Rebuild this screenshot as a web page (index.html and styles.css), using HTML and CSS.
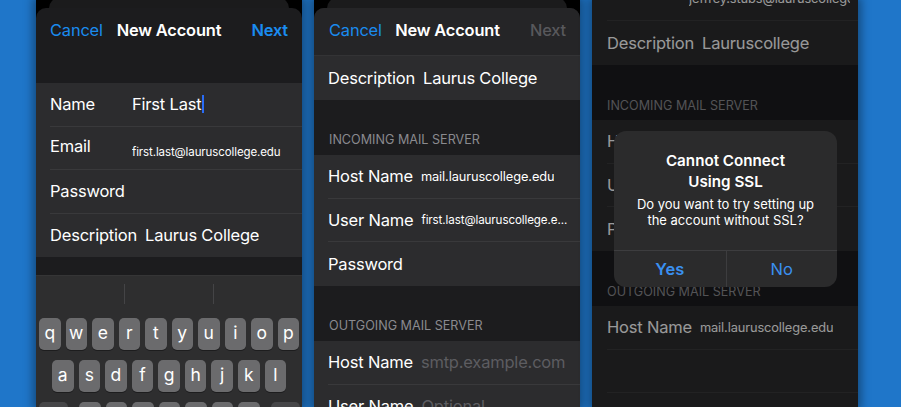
FILE: index.html
```html
<!DOCTYPE html>
<html lang="en">
<head>
<meta charset="utf-8">
<title>New Account setup</title>
<link rel="stylesheet" href="styles.css">
</head>
<body>
<div class="stage">

  <section class="phone">
    <div class="backcard"></div>
    <div class="sheet">
      <header class="nav">
        <span class="link">Cancel</span>
        <span class="title">New Account</span>
        <span class="link next">Next</span>
      </header>
      <div class="navspace"></div>
      <div class="group">
        <div class="row"><span class="label">Name</span><span class="value">First Last<span class="caret"></span></span></div>
        <div class="row"><span class="label label-up">Email</span><span class="value small email">first.last@lauruscollege.edu</span></div>
        <div class="row"><span class="label">Password</span></div>
        <div class="row"><span class="label">Description</span><span class="value">Laurus College</span></div>
      </div>
      <div class="kb-gap"></div>
      <div class="keyboard">
        <div class="predict"><span></span><span class="div"></span><span></span><span class="div"></span><span></span></div>
        <div class="krow">
          <span class="key">q</span><span class="key">w</span><span class="key">e</span><span class="key">r</span><span class="key">t</span><span class="key">y</span><span class="key">u</span><span class="key">i</span><span class="key">o</span><span class="key">p</span>
        </div>
        <div class="krow krow2">
          <span class="key">a</span><span class="key">s</span><span class="key">d</span><span class="key">f</span><span class="key">g</span><span class="key">h</span><span class="key">j</span><span class="key">k</span><span class="key">l</span>
        </div>
        <div class="krow krow3">
          <span class="key mod"></span>
          <span class="key"></span><span class="key"></span><span class="key"></span><span class="key"></span><span class="key"></span><span class="key"></span><span class="key"></span>
          <span class="key mod"></span>
        </div>
      </div>
    </div>
  </section>

  <section class="phone">
    <div class="backcard"></div>
    <div class="sheet">
      <header class="nav nav-solid">
        <span class="link">Cancel</span>
        <span class="title">New Account</span>
        <span class="link next disabled">Next</span>
      </header>
      <div class="group">
        <div class="row"><span class="label">Description</span><span class="value">Laurus College</span></div>
      </div>
      <div class="section-head">INCOMING MAIL SERVER</div>
      <div class="group">
        <div class="row"><span class="label">Host Name</span><span class="value small">mail.lauruscollege.edu</span></div>
        <div class="row"><span class="label">User Name</span><span class="value small tight">first.last@lauruscollege.e...</span></div>
        <div class="row"><span class="label">Password</span></div>
      </div>
      <div class="section-head">OUTGOING MAIL SERVER</div>
      <div class="group">
        <div class="row"><span class="label">Host Name</span><span class="value placeholder">smtp.example.com</span></div>
        <div class="row"><span class="label">User Name</span><span class="value placeholder">Optional</span></div>
      </div>
    </div>
  </section>

  <section class="phone phone3">
    <div class="scroll">
      <div class="group">
        <div class="row"><span class="label"></span><span class="value small">jeffrey.stubs@lauruscollege.c...</span></div>
        <div class="row"><span class="label">Description</span><span class="value">Lauruscollege</span></div>
      </div>
      <div class="section-head">INCOMING MAIL SERVER</div>
      <div class="group">
        <div class="row"><span class="label">Host Name</span></div>
        <div class="row"><span class="label">User Name</span></div>
        <div class="row"><span class="label">Password</span></div>
      </div>
      <div class="section-head">OUTGOING MAIL SERVER</div>
      <div class="group">
        <div class="row"><span class="label">Host Name</span><span class="value small">mail.lauruscollege.edu</span></div>
        <div class="row"><span class="label"></span></div>
        <div class="row"><span class="label"></span></div>
      </div>
    </div>
    <div class="dim"></div>
    <div class="alert">
      <div class="alert-body">
        <div class="alert-title">Cannot Connect<br>Using SSL</div>
        <div class="alert-msg">Do you want to try setting up<br>the account without SSL?</div>
      </div>
      <div class="alert-actions">
        <span class="alert-btn bold">Yes</span>
        <span class="alert-btn">No</span>
      </div>
    </div>
  </section>

</div>
</body>
</html>
```

FILE: styles.css
```css
* { box-sizing: border-box; margin: 0; padding: 0; }

html, body {
  width: 901px;
  height: 407px;
  overflow: hidden;
}

body {
  background: #1f76c9;
  font-family: Inter, "Noto Sans", "Liberation Sans", sans-serif;
  -webkit-font-smoothing: antialiased;
  color: #fff;
}

.stage {
  display: flex;
  gap: 12px;
  padding-left: 36px;
  height: 407px;
}

.phone {
  position: relative;
  width: 266px;
  height: 407px;
  flex-shrink: 0;
  background: #000;
  overflow: hidden;
  display: flex;
  flex-direction: column;
  box-shadow: 0 0 9px 3px rgba(0, 0, 0, 0.38);
}

.backcard {
  height: 10px;
  margin: -2px 13px 0;
  flex-shrink: 0;
  background: #1b1b1c;
  border-radius: 10px 10px 0 0;
}

.sheet {
  flex: 1;
  display: flex;
  flex-direction: column;
  background: #1c1c1e;
  border-radius: 10px 10px 0 0;
  overflow: hidden;
}

.nav {
  height: 44px;
  flex-shrink: 0;
  display: grid;
  grid-template-columns: 1fr auto 1fr;
  align-items: center;
  padding: 0 14px;
  font-size: 16.4px;
  letter-spacing: -0.15px;
}

.nav-solid {
  height: 48px;
  padding: 0 14px 4px 15px;
  background: #252527;
  border-bottom: 1px solid #333335;
}

.link { color: #1a8cf0; }
.title { color: #fff; font-weight: 600; text-align: center; }
.next { text-align: right; font-weight: 600; }
.next.disabled { color: #58585c; font-weight: 500; }

.navspace { height: 31px; flex-shrink: 0; }

.group {
  background: #2c2c2e;
  flex-shrink: 0;
}

.row {
  height: 43.5px;
  display: flex;
  align-items: center;
  gap: 8px;
  margin-left: 14px;
  padding-right: 8px;
  border-bottom: 1px solid #39393b;
  font-size: 16.5px;
  letter-spacing: -0.2px;
  white-space: nowrap;
  overflow: hidden;
}
.row:last-child { border-bottom: none; }

.label { min-width: 74px; flex-shrink: 0; color: #fff; }
.label-up { position: relative; top: -2px; }

.value {
  color: #fff;
  display: flex;
  align-items: center;
  min-width: 0;
  overflow: hidden;
}
.value.small { font-size: 12.8px; letter-spacing: -0.1px; }
.value.tight { font-size: 11.6px; }
.value.email { font-size: 11.5px; position: relative; top: 4px; }
.value.placeholder { color: #5d5d61; }

.caret {
  display: inline-block;
  width: 2px;
  height: 18px;
  margin-left: 1px;
  background: #2a6cf6;
}

.section-head {
  height: 55.5px;
  flex-shrink: 0;
  display: flex;
  align-items: flex-end;
  padding: 0 0 8px 15px;
  font-size: 12.6px;
  color: #8a8a8f;
}

/* keyboard */
.kb-gap { height: 18px; flex-shrink: 0; }

.keyboard {
  flex: 1;
  background: #2e2e2f;
  border-top: 1px solid #353536;
  display: flex;
  flex-direction: column;
  gap: 10px;
}

.predict {
  height: 32px;
  display: grid;
  grid-template-columns: 1fr 1px 1fr 1px 1fr;
  align-items: center;
}
.predict .div { height: 20px; background: #444446; margin-top: 4px; }

.krow {
  display: flex;
  gap: 5px;
  padding: 0 3px;
}
.krow2 { padding: 0 16px; }

.key {
  flex: 1;
  height: 32px;
  border-radius: 5px;
  background: #6b6b6d;
  box-shadow: 0 1px 0 #1d1d1e;
  display: flex;
  align-items: center;
  justify-content: center;
  padding-bottom: 3px;
  font-size: 17.5px;
  color: #fff;
}
.krow3 .key { flex: 0 0 21.5px; }
.krow3 .key.mod { flex: 0 0 29px; background: #464648; }
.krow3 .key.mod:first-child { margin-right: 6px; }
.krow3 .key.mod:last-child { margin-left: 6px; }

/* third screen */
.scroll {
  margin-top: -22.5px;
  background: #1c1c1e;
  flex: 1;
  display: flex;
  flex-direction: column;
}
.phone3 .row { margin-left: 15px; }
.phone3 .section-head { padding-bottom: 7px; }

.dim {
  position: absolute;
  inset: 0;
  background: rgba(0, 0, 0, 0.4);
}

.alert {
  position: absolute;
  left: 22px;
  top: 131px;
  width: 223px;
  height: 156px;
  border-radius: 12px;
  background: #2b2b2c;
  display: flex;
  flex-direction: column;
  overflow: hidden;
}

.alert-body {
  flex: 1;
  display: flex;
  flex-direction: column;
  align-items: center;
  text-align: center;
  padding-top: 19px;
}

.alert-title {
  font-size: 15.2px;
  font-weight: 600;
  line-height: 21px;
  color: #fff;
}

.alert-msg {
  margin-top: 4px;
  font-size: 13px;
  line-height: 16px;
  color: #fff;
}

.alert-actions {
  height: 37px;
  display: grid;
  grid-template-columns: 1fr 1fr;
  border-top: 1px solid #3d3d3f;
}

.alert-btn {
  display: flex;
  align-items: center;
  justify-content: center;
  font-size: 16.5px;
  color: #3a90f0;
}
.alert-btn + .alert-btn { border-left: 1px solid #3d3d3f; }
.alert-btn.bold { font-weight: 600; }
```
